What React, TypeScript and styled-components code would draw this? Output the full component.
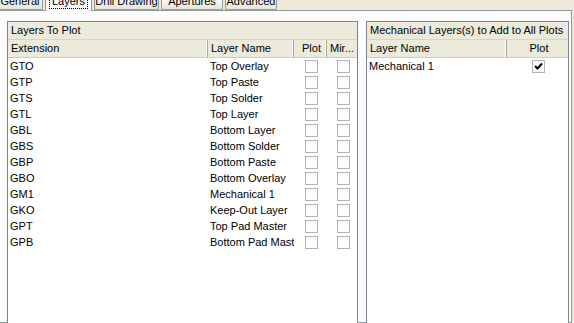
import React from 'react';
import styled, { createGlobalStyle } from 'styled-components';

const GlobalStyle = createGlobalStyle`
  html, body {
    margin: 0;
    padding: 0;
    background: #ece9d8;
  }
  body {
    font-family: 'Liberation Sans', Arial, sans-serif;
    font-size: 11px;
    color: #000;
  }
`;

const Window = styled.div`
  width: 574px;
  height: 323px;
  overflow: hidden;
  display: flex;
  flex-direction: column;
  background: #ece9d8;
`;

const TabStrip = styled.div`
  display: flex;
  align-items: flex-end;
  gap: 2px;
  height: 18px;
  margin-top: -8px;
  margin-left: -3px;
  position: relative;
  z-index: 1;
`;

const Tab = styled.div<{ $w: number; $active?: boolean }>`
  width: ${(p) => p.$w}px;
  height: ${(p) => (p.$active ? 19 : 18)}px;
  margin-bottom: ${(p) => (p.$active ? -1 : 0)}px;
  box-sizing: border-box;
  border: 1px solid #919b9c;
  border-bottom: ${(p) => (p.$active ? 'none' : '1px solid #919b9c')};
  border-radius: 3px 3px 0 0;
  background: ${(p) =>
    p.$active ? '#fcfcfe' : 'linear-gradient(#ffffff, #f3f2ec 60%, #e6e4da)'};
  display: flex;
  justify-content: center;
  align-items: flex-start;
  padding-top: 2px;
  line-height: 13px;
  white-space: nowrap;
`;

const FocusLabel = styled.span`
  outline: 1px dotted #000;
  outline-offset: 0px;
  padding: 0 2px;
`;

const TabPage = styled.div`
  flex: 1;
  width: 573px;
  margin-left: -1px;
  box-sizing: border-box;
  border: 1px solid #919b9c;
  background: #fcfcfe;
  display: flex;
  gap: 8px;
  padding: 10px 5px 0 7px;
`;

const ListBox = styled.div<{ $w: number }>`
  width: ${(p) => p.$w}px;
  flex: none;
  box-sizing: border-box;
  border: 1px solid #7a8590;
  background: #fff;
  display: flex;
  flex-direction: column;
  margin-bottom: -4px;
`;

const GroupHeader = styled.div`
  height: 17px;
  line-height: 17px;
  padding-left: 3px;
  background: #ebeadb;
  border-bottom: 1px solid #d8d5c7;
  white-space: nowrap;
  overflow: hidden;
`;

const Grid = styled.div<{ $cols: string }>`
  display: grid;
  grid-template-columns: ${(p) => p.$cols};
`;

const HeadCell = styled.div<{ $center?: boolean; $last?: boolean }>`
  height: 17px;
  line-height: 17px;
  background: #ebeadb;
  border-bottom: 1px solid #d0ccbc;
  border-right: ${(p) => (p.$last ? 'none' : '1px solid #aca899')};
  box-shadow: ${(p) => (p.$last ? 'none' : 'inset -1px 0 0 #fff')};
  padding-left: 3px;
  text-align: ${(p) => (p.$center ? 'center' : 'left')};
  white-space: nowrap;
  overflow: hidden;
`;

const Cell = styled.div<{ $center?: boolean }>`
  height: 16px;
  line-height: 16px;
  padding-left: 2px;
  display: flex;
  align-items: center;
  justify-content: ${(p) => (p.$center ? 'center' : 'flex-start')};
  white-space: nowrap;
  overflow: hidden;
`;

const Box = styled.span`
  width: 13px;
  height: 13px;
  box-sizing: border-box;
  border: 1px solid #b2b2b2;
  background: #fff;
  display: inline-flex;
  align-items: center;
  justify-content: center;
`;

function Check({ checked }: { checked?: boolean }) {
  return (
    <Box>
      {checked && (
        <svg width="9" height="9" viewBox="0 0 9 9">
          <path d="M1 4 L3.5 6.5 L8 1.5" stroke="#000" strokeWidth="2" fill="none" />
        </svg>
      )}
    </Box>
  );
}

const layers: [string, string][] = [
  ['GTO', 'Top Overlay'],
  ['GTP', 'Top Paste'],
  ['GTS', 'Top Solder'],
  ['GTL', 'Top Layer'],
  ['GBL', 'Bottom Layer'],
  ['GBS', 'Bottom Solder'],
  ['GBP', 'Bottom Paste'],
  ['GBO', 'Bottom Overlay'],
  ['GM1', 'Mechanical 1'],
  ['GKO', 'Keep-Out Layer'],
  ['GPT', 'Top Pad Master'],
  ['GPB', 'Bottom Pad Master'],
];

const tabs: [string, number][] = [
  ['General', 46],
  ['Layers', 47],
  ['Drill Drawing', 65],
  ['Apertures', 62],
  ['Advanced', 52],
];

export default function App() {
  return (
    <Window>
      <GlobalStyle />
      <TabStrip>
        {tabs.map(([name, w]) => (
          <Tab key={name} $w={w} $active={name === 'Layers'}>
            {name === 'Layers' ? <FocusLabel>{name}</FocusLabel> : name}
          </Tab>
        ))}
      </TabStrip>
      <TabPage>
        <ListBox $w={351}>
          <GroupHeader>Layers To Plot</GroupHeader>
          <Grid $cols="200px 86px 33px 1fr">
            <HeadCell>Extension</HeadCell>
            <HeadCell>Layer Name</HeadCell>
            <HeadCell $center>Plot</HeadCell>
            <HeadCell $last>Mir...</HeadCell>
            {layers.map(([ext, name]) => (
              <React.Fragment key={ext}>
                <Cell>{ext}</Cell>
                <Cell>{name}</Cell>
                <Cell $center>
                  <Check />
                </Cell>
                <Cell $center>
                  <Check />
                </Cell>
              </React.Fragment>
            ))}
          </Grid>
        </ListBox>
        <ListBox $w={203}>
          <GroupHeader>Mechanical Layers(s) to Add to All Plots</GroupHeader>
          <Grid $cols="140px 1fr">
            <HeadCell>Layer Name</HeadCell>
            <HeadCell $center $last>Plot</HeadCell>
            <Cell>Mechanical 1</Cell>
            <Cell $center>
              <Check checked />
            </Cell>
          </Grid>
        </ListBox>
      </TabPage>
    </Window>
  );
}
